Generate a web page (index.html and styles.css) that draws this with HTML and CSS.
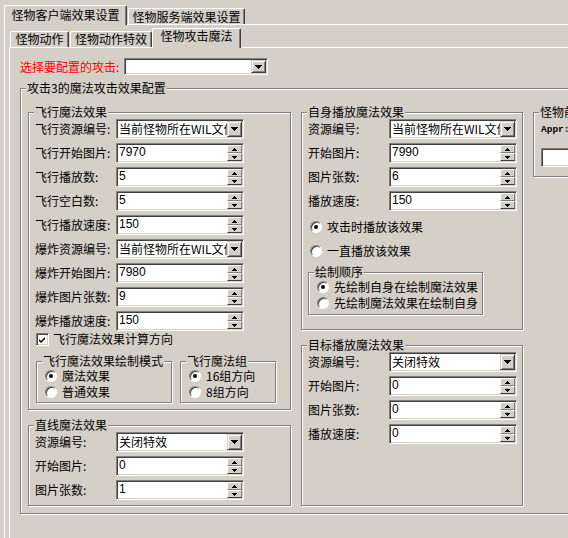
FILE: index.html
```html
<!DOCTYPE html>
<html lang="zh-CN">
<head>
<meta charset="utf-8">
<title>怪物效果设置</title>
<link rel="stylesheet" href="styles.css">
</head>
<body>
<div class="window">
  <div class="tabstrip outer-strip">
    <div class="tab sel t-client">怪物客户端效果设置</div>
    <div class="tab t-server">怪物服务端效果设置</div>
  </div>
  <div class="panel outer-panel">
    <div class="tabstrip inner-strip">
      <div class="tab t-act">怪物动作</div>
      <div class="tab t-fx">怪物动作特效</div>
      <div class="tab sel t-magic">怪物攻击魔法</div>
    </div>
    <div class="panel inner-panel">
      <div class="pick-row">
        <span class="pick-label">选择要配置的攻击:</span>
        <div class="combo pick-combo"><span class="ctext"></span><span class="dd"><i class="arrow-dn"></i></span></div>
      </div>
      <div class="group main-group">
        <span class="cap">攻击3的魔法攻击效果配置</span>
        <div class="cols">
          <div class="col col-left">
            <div class="group g-fly">
              <span class="cap">飞行魔法效果</span>
              <div class="rows">
                <div class="row"><span class="lbl">飞行资源编号:</span><div class="combo"><span class="ctext">当前怪物所在WIL文件</span><span class="dd"><i class="arrow-dn"></i></span></div></div>
                <div class="row"><span class="lbl">飞行开始图片:</span><div class="spin"><span class="val">7970</span><span class="ud"><i><b class="arrow-up"></b></i><i><b class="arrow-sm"></b></i></span></div></div>
                <div class="row"><span class="lbl">飞行播放数:</span><div class="spin"><span class="val">5</span><span class="ud"><i><b class="arrow-up"></b></i><i><b class="arrow-sm"></b></i></span></div></div>
                <div class="row"><span class="lbl">飞行空白数:</span><div class="spin"><span class="val">5</span><span class="ud"><i><b class="arrow-up"></b></i><i><b class="arrow-sm"></b></i></span></div></div>
                <div class="row"><span class="lbl">飞行播放速度:</span><div class="spin"><span class="val">150</span><span class="ud"><i><b class="arrow-up"></b></i><i><b class="arrow-sm"></b></i></span></div></div>
                <div class="row"><span class="lbl">爆炸资源编号:</span><div class="combo"><span class="ctext">当前怪物所在WIL文件</span><span class="dd"><i class="arrow-dn"></i></span></div></div>
                <div class="row"><span class="lbl">爆炸开始图片:</span><div class="spin"><span class="val">7980</span><span class="ud"><i><b class="arrow-up"></b></i><i><b class="arrow-sm"></b></i></span></div></div>
                <div class="row"><span class="lbl">爆炸图片张数:</span><div class="spin"><span class="val">9</span><span class="ud"><i><b class="arrow-up"></b></i><i><b class="arrow-sm"></b></i></span></div></div>
                <div class="row"><span class="lbl">爆炸播放速度:</span><div class="spin"><span class="val">150</span><span class="ud"><i><b class="arrow-up"></b></i><i><b class="arrow-sm"></b></i></span></div></div>
              </div>
              <div class="check-row">
                <span class="checkbox"><svg width="9" height="9" viewBox="0 0 9 9"><path d="M1 4l2 2 4-4v2l-4 4-2-2z" fill="#000"/></svg></span>
                <span>飞行魔法效果计算方向</span>
              </div>
              <div class="sub-row">
                <div class="group sub g-mode">
                  <span class="cap">飞行魔法效果绘制模式</span>
                  <div class="radio-row"><span class="radio on"></span><span>魔法效果</span></div>
                  <div class="radio-row"><span class="radio"></span><span>普通效果</span></div>
                </div>
                <div class="group sub g-dir">
                  <span class="cap">飞行魔法组</span>
                  <div class="radio-row"><span class="radio on"></span><span>16组方向</span></div>
                  <div class="radio-row"><span class="radio"></span><span>8组方向</span></div>
                </div>
              </div>
            </div>
            <div class="group g-line">
              <span class="cap">直线魔法效果</span>
              <div class="rows">
                <div class="row"><span class="lbl">资源编号:</span><div class="combo"><span class="ctext">关闭特效</span><span class="dd"><i class="arrow-dn"></i></span></div></div>
                <div class="row"><span class="lbl">开始图片:</span><div class="spin"><span class="val">0</span><span class="ud"><i><b class="arrow-up"></b></i><i><b class="arrow-sm"></b></i></span></div></div>
                <div class="row"><span class="lbl">图片张数:</span><div class="spin"><span class="val">1</span><span class="ud"><i><b class="arrow-up"></b></i><i><b class="arrow-sm"></b></i></span></div></div>
              </div>
            </div>
          </div>
          <div class="col col-mid">
            <div class="group g-self">
              <span class="cap">自身播放魔法效果</span>
              <div class="rows">
                <div class="row"><span class="lbl">资源编号:</span><div class="combo"><span class="ctext">当前怪物所在WIL文件</span><span class="dd"><i class="arrow-dn"></i></span></div></div>
                <div class="row"><span class="lbl">开始图片:</span><div class="spin"><span class="val">7990</span><span class="ud"><i><b class="arrow-up"></b></i><i><b class="arrow-sm"></b></i></span></div></div>
                <div class="row"><span class="lbl">图片张数:</span><div class="spin"><span class="val">6</span><span class="ud"><i><b class="arrow-up"></b></i><i><b class="arrow-sm"></b></i></span></div></div>
                <div class="row"><span class="lbl">播放速度:</span><div class="spin"><span class="val">150</span><span class="ud"><i><b class="arrow-up"></b></i><i><b class="arrow-sm"></b></i></span></div></div>
              </div>
              <div class="radio-row self-radio"><span class="radio on"></span><span>攻击时播放该效果</span></div>
              <div class="radio-row self-radio"><span class="radio"></span><span>一直播放该效果</span></div>
              <div class="group sub g-order">
                <span class="cap">绘制顺序</span>
                <div class="radio-row"><span class="radio on"></span><span>先绘制自身在绘制魔法效果</span></div>
                <div class="radio-row"><span class="radio"></span><span>先绘制魔法效果在绘制自身</span></div>
              </div>
            </div>
            <div class="group g-target">
              <span class="cap">目标播放魔法效果</span>
              <div class="rows">
                <div class="row"><span class="lbl">资源编号:</span><div class="combo"><span class="ctext">关闭特效</span><span class="dd"><i class="arrow-dn"></i></span></div></div>
                <div class="row"><span class="lbl">开始图片:</span><div class="spin"><span class="val">0</span><span class="ud"><i><b class="arrow-up"></b></i><i><b class="arrow-sm"></b></i></span></div></div>
                <div class="row"><span class="lbl">图片张数:</span><div class="spin"><span class="val">0</span><span class="ud"><i><b class="arrow-up"></b></i><i><b class="arrow-sm"></b></i></span></div></div>
                <div class="row"><span class="lbl">播放速度:</span><div class="spin"><span class="val">0</span><span class="ud"><i><b class="arrow-up"></b></i><i><b class="arrow-sm"></b></i></span></div></div>
              </div>
            </div>
          </div>
          <div class="col col-right">
            <div class="group g-front">
              <span class="cap">怪物前端显示</span>
              <div class="appr">Appr:</div>
              <div class="front-edit"></div>
            </div>
          </div>
        </div>
      </div>
    </div>
  </div>
</div>
</body>
</html>
```

FILE: styles.css
```css
* { box-sizing: border-box; margin: 0; padding: 0; }
html, body { width: 568px; height: 538px; overflow: hidden; }
body {
  background: #d4d0c8;
  font-family: "Noto Sans CJK SC", "Liberation Sans", sans-serif;
  font-size: 12px;
  line-height: 14px;
  color: #000;
}
i, b { font-style: normal; font-weight: normal; }

.window { padding: 5px 0 0 4px; width: 660px; }

/* tabs */
.tabstrip { display: flex; align-items: flex-end; height: 19px; }
.tab {
  display: flex;
  justify-content: center;
  height: 16px;
  background: #d4d0c8;
  border-top: 1px solid #fff;
  border-left: 1px solid #fff;
  border-right: 1px solid #404040;
  box-shadow: inset -1px 0 #808080;
  border-radius: 2px 2px 0 0;
  white-space: nowrap;
}
.tab.sel { height: 20px; margin-bottom: -1px; position: relative; z-index: 1; }
.outer-strip .tab { padding-top: 1px; }
.outer-strip .tab.sel { padding-top: 2px; }
.t-client { width: 123px; }
.t-server { width: 117px; margin-left: 1px; }
.inner-strip { padding-left: 1px; }
.t-act { width: 59px; }
.t-fx { width: 82px; margin-left: 1px; }
.t-magic { width: 89px; }

.panel { border-top: 1px solid #fff; border-left: 1px solid #fff; }
.outer-panel { height: 520px; padding: 3px 0 0 4px; }
.inner-panel { height: 500px; padding: 10px 0 0 10px; }

/* attack picker */
.pick-row { display: flex; align-items: center; height: 17px; }
.pick-label { color: #f00; width: 104px; white-space: nowrap; }
.combo.pick-combo { width: 144px; height: 17px; }

/* group boxes */
.group {
  position: relative;
  border: 1px solid #808080;
  box-shadow: inset 1px 1px #fff, 1px 1px #fff;
}
.cap {
  position: absolute;
  top: -8px;
  left: 5px;
  padding: 0 1px;
  background: #d4d0c8;
  white-space: nowrap;
  line-height: 14px;
}
.main-group { margin-top: 13px; width: 560px; height: 426px; padding: 23px 0 0 7px; }
.cols { display: flex; gap: 10px; align-items: flex-start; }
.col { display: flex; flex-direction: column; flex: none; }
.col-left { width: 263px; }
.col-mid { width: 222px; }
.col-right { width: 120px; }

.g-fly { height: 298px; padding: 6px 0 0 6px; }
.g-line { margin-top: 15px; height: 81px; padding: 6px 0 0 6px; }
.g-self { height: 218px; padding: 6px 0 0 6px; }
.g-target { margin-top: 15px; height: 161px; padding: 6px 0 0 6px; }
.g-front { height: 65px; padding: 11px 0 0 7px; }

/* rows */
.rows { display: flex; flex-direction: column; gap: 4px; }
.row { display: flex; align-items: center; height: 20px; }
.lbl { width: 81px; white-space: nowrap; flex: none; }

.spin, .combo, .front-edit, .checkbox {
  background: #fff;
  border: 1px solid;
  border-color: #808080 #fff #fff #808080;
  box-shadow: inset 1px 1px #404040, inset -1px -1px #d4d0c8;
}
.spin, .combo { width: 128px; height: 20px; padding: 1px; display: flex; flex: none; }
.val {
  flex: 1;
  padding-left: 1px;
  font-family: "Liberation Sans", sans-serif;
  font-size: 12px;
  line-height: 14px;
  overflow: hidden;
  white-space: nowrap;
}
.ctext {
  flex: 1;
  padding-left: 1px;
  line-height: 16px;
  overflow: hidden;
  white-space: nowrap;
}
.pick-combo .ctext { line-height: 13px; }
.ud { width: 15px; display: flex; flex-direction: column; flex: none; }
.ud i {
  flex: 1;
  display: flex;
  align-items: center;
  justify-content: center;
  background: #d4d0c8;
  border: 1px solid;
  border-color: #fff #808080 #808080 #fff;
}
.ud i + i { border-bottom-color: #404040; }
.dd {
  width: 15px;
  flex: none;
  display: flex;
  align-items: center;
  justify-content: center;
  background: #d4d0c8;
  border: 1px solid;
  border-color: #d4d0c8 #404040 #404040 #d4d0c8;
  box-shadow: inset 1px 1px #fff, inset -1px -1px #808080;
}

/* pixel arrows drawn from a 1x1 dot */
.arrow-dn {
  display: block; width: 1px; height: 1px; margin-bottom: 3px; background: #000;
  box-shadow:
    -3px 0 #000, -2px 0 #000, -1px 0 #000, 1px 0 #000, 2px 0 #000, 3px 0 #000,
    -2px 1px #000, -1px 1px #000, 0 1px #000, 1px 1px #000, 2px 1px #000,
    -1px 2px #000, 0 2px #000, 1px 2px #000,
    0 3px #000;
}
.arrow-up {
  display: block; width: 1px; height: 1px; margin-bottom: 2px; background: #000;
  box-shadow:
    -1px 1px #000, 0 1px #000, 1px 1px #000,
    -2px 2px #000, -1px 2px #000, 0 2px #000, 1px 2px #000, 2px 2px #000;
}
.arrow-sm {
  display: block; width: 1px; height: 1px; margin-bottom: 2px; background: #000;
  box-shadow:
    -2px 0 #000, -1px 0 #000, 1px 0 #000, 2px 0 #000,
    -1px 1px #000, 0 1px #000, 1px 1px #000,
    0 2px #000;
}

/* checkbox */
.check-row { display: flex; align-items: center; height: 14px; margin: 1px 0 0 1px; white-space: nowrap; }
.checkbox {
  width: 13px; height: 13px; flex: none;
  display: flex; align-items: center; justify-content: center;
  margin-right: 4px;
}
.checkbox svg { display: block; }

/* sub groups & radios */
.sub-row { display: flex; gap: 8px; margin: 15px 0 0 1px; }
.sub { height: 42px; padding: 6px 0 0 8px; }
.g-mode { width: 136px; }
.g-dir { width: 96px; }
.g-order { width: 175px; height: 43px; margin-top: 13px; }

.radio-row { display: flex; align-items: center; height: 16px; white-space: nowrap; }
.self-radio { margin: 8px 0 0 2px; }
.radio {
  width: 12px; height: 12px; flex: none;
  border-radius: 50%;
  background: #fff;
  border: 1px solid;
  border-color: #808080 #fff #fff #808080;
  box-shadow: inset 1px 1px #404040;
  margin-right: 5px;
  position: relative;
}
.radio.on::after {
  content: "";
  position: absolute;
  left: 3px; top: 3px;
  width: 4px; height: 4px;
  border-radius: 50%;
  background: #000;
}

/* right partial group */
.appr { font-family: "Liberation Mono", monospace; font-size: 9.5px; font-weight: bold; line-height: 12px; white-space: nowrap; }
.front-edit { margin-top: 12px; width: 100px; height: 19px; }
```
